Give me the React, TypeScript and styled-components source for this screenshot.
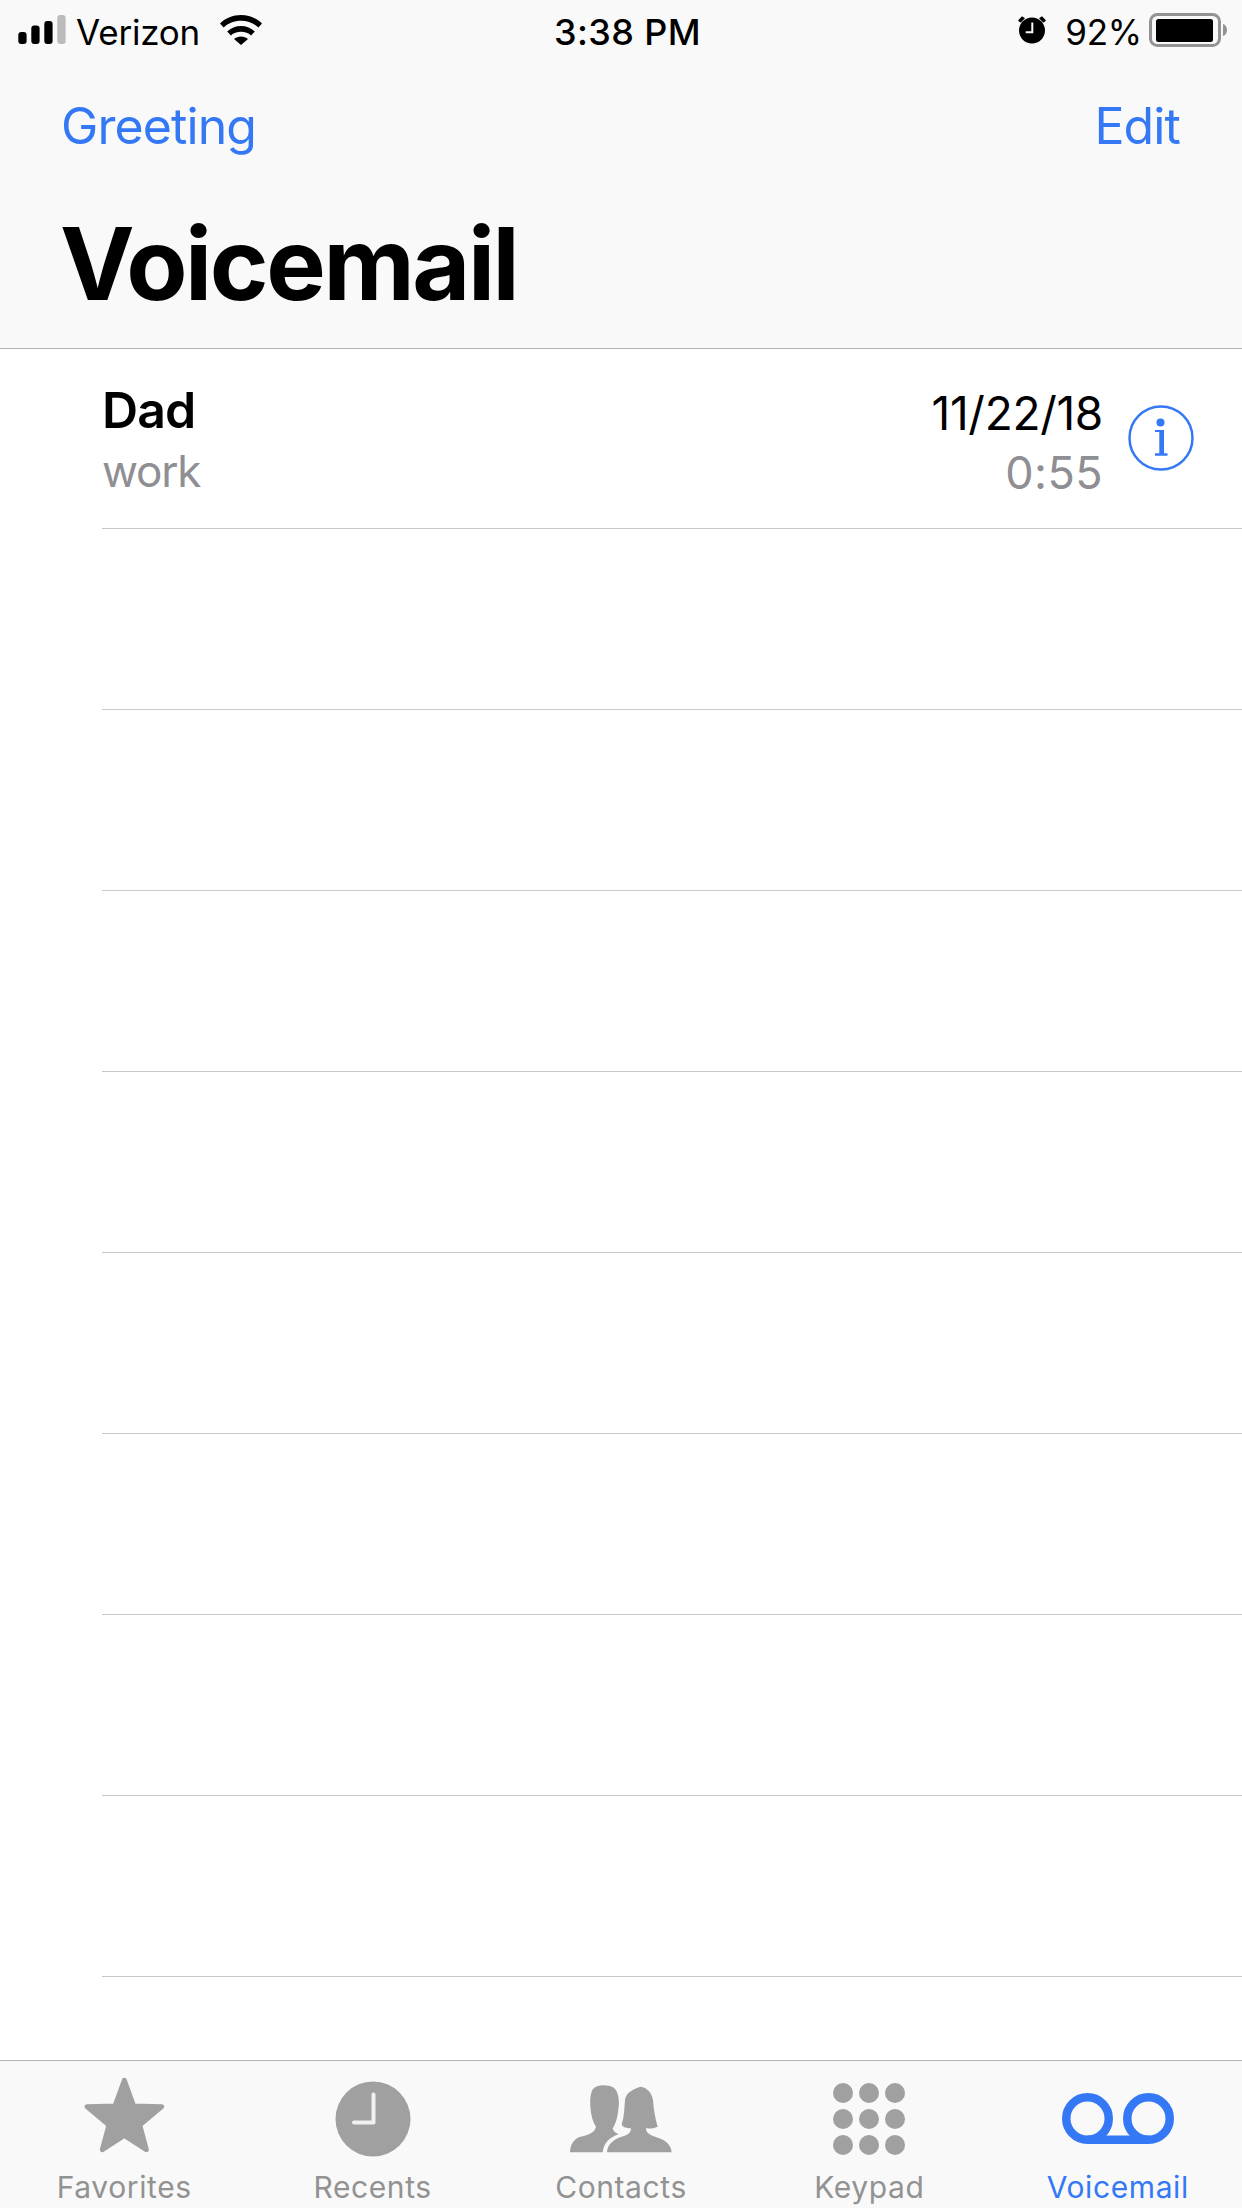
import React from 'react';
import styled, { createGlobalStyle } from 'styled-components';

const BLUE = '#3478f6';
const ICON_GRAY = '#a0a0a0';
const SANS = 'Inter, "Liberation Sans", sans-serif';

const GlobalStyle = createGlobalStyle`
  html, body {
    margin: 0;
    padding: 0;
    background: #fff;
  }
`;

const Screen = styled.div`
  width: 1242px;
  height: 2208px;
  display: flex;
  flex-direction: column;
  overflow: hidden;
  background: #fff;
  color: #000;
  font-family: ${SANS};
`;

const Header = styled.header`
  height: 348px;
  flex: none;
  display: flex;
  flex-direction: column;
  background: #f9f9f9;
  border-bottom: 1px solid #b2b2b2;
`;

const StatusBar = styled.div`
  height: 60px;
  display: grid;
  grid-template-columns: 1fr auto 1fr;
  align-items: center;
  padding: 0 15px 0 18px;
`;

const StatusGroup = styled.div<{ $end?: boolean }>`
  display: flex;
  align-items: center;
  justify-content: ${p => (p.$end ? 'flex-end' : 'flex-start')};
`;

const StatusText = styled.span<{ $gap?: number }>`
  font-size: 35px;
  line-height: 56px;
  letter-spacing: -0.2px;
  margin: 4px 0 0 ${p => p.$gap ?? 0}px;
`;

const StatusIcon = styled.span<{ $gap?: number }>`
  display: flex;
  margin-left: ${p => p.$gap ?? 0}px;
`;

const Clock = styled.span`
  font-size: 36px;
  line-height: 56px;
  margin: 4px 0 0 10px;
  font-weight: 500;
  letter-spacing: 0.4px;
`;

const NavRow = styled.div`
  height: 68px;
  margin-top: 32px;
  display: flex;
  align-items: center;
  justify-content: space-between;
  padding: 0 62px 0 61px;
`;

const NavLink = styled.span`
  font-size: 50px;
  line-height: 68px;
  letter-spacing: -0.9px;
  color: ${BLUE};
`;

const Title = styled.h1`
  margin: 49px 0 0;
  padding-left: 60px;
  font-size: 100px;
  line-height: 110px;
  font-weight: 700;
  letter-spacing: -2.4px;
`;

const List = styled.div`
  flex: 1;
  display: flex;
  flex-direction: column;
  min-height: 0;
  margin-top: -1px;
`;

const Row = styled.div`
  height: 180px;
  flex: none;
  margin-left: 102px;
  border-bottom: 1px solid #c8c7cc;
  display: flex;
  align-items: center;
  padding-right: 48px;
`;

const RowText = styled.div`
  flex: 1;
  display: flex;
  flex-direction: column;
  padding-top: 6px;
`;

const RowMeta = styled.div`
  display: flex;
  flex-direction: column;
  align-items: flex-end;
  margin-right: 25px;
  padding-top: 10px;
`;

const Name = styled.span`
  font-size: 50px;
  line-height: 60px;
  font-weight: 600;
  letter-spacing: -0.9px;
`;

const Sub = styled.span`
  font-size: 44px;
  line-height: 62px;
  color: #8e8e93;
  letter-spacing: -1.2px;
`;

const DateText = styled.span`
  font-size: 46px;
  line-height: 60px;
  letter-spacing: -0.3px;
`;

const Duration = styled.span`
  font-size: 45px;
  line-height: 60px;
  color: #8e8e93;
  letter-spacing: 0.4px;
`;

const TabBar = styled.nav`
  height: 147px;
  flex: none;
  display: grid;
  grid-template-columns: repeat(5, 1fr);
  background: #f9f9f9;
  border-top: 1px solid #b2b2b2;
`;

const Tab = styled.div<{ $active?: boolean }>`
  display: flex;
  flex-direction: column;
  align-items: center;
  color: ${p => (p.$active ? BLUE : '#929292')};
`;

const TabIconSlot = styled.div`
  height: 101px;
  padding-top: 7px;
  display: flex;
  align-items: center;
  justify-content: center;
  color: ${ICON_GRAY};
`;

const TabLabel = styled.span`
  font-size: 30px;
  line-height: 36px;
  letter-spacing: 0.6px;
`;

const SignalIcon = () => (
  <svg width="48" height="30" viewBox="0 0 48 30">
    <rect x="0.300" y="17" width="8.300" height="12" rx="3" fill="#000" />
    <rect x="13.300" y="10.500" width="8.300" height="18.500" rx="3" fill="#000" />
    <rect x="26.300" y="6" width="8.300" height="23" rx="3" fill="#000" />
    <rect x="39.300" y="0" width="8.300" height="29" rx="3" fill="#bbb" />
  </svg>
);

const WifiIcon = () => (
  <svg width="42" height="30" viewBox="0 0 42 30">
    <path d="M0 8.500C5.500 3 13 0 21 0s15.500 3 21 8.500l-3.600 4C33.800 8.200 27.800 5.800 21 5.800S8.200 8.200 3.600 12.500Z" fill="#000" />
    <path d="M7.200 16.500C10.800 13 15.700 11 21 11s10.200 2 13.800 5.500l-3.700 4C28.500 18 25 16.800 21 16.800s-7.500 1.200-10.100 3.700Z" fill="#000" />
    <path d="M14 24C15.800 22.400 18.300 21.500 21 21.500s5.200 0.900 7 2.500L21 30Z" fill="#000" />
  </svg>
);

const AlarmIcon = () => (
  <svg width="30" height="30" viewBox="0 0 30 30">
    <circle cx="15" cy="15.500" r="13" fill="#000" />
    <path d="M1 5.500 5 1.300 8 3.300 3.500 7.700ZM29 5.500 25 1.300 22 3.300 26.500 7.700Z" fill="#000" />
    <path d="M15.300 7.500V17.200H8.700" fill="none" stroke="#f9f9f9" strokeWidth="2" />
  </svg>
);

const BatteryIcon = () => (
  <svg width="78" height="36" viewBox="0 0 78 36">
    <rect x="1.500" y="2.500" width="69" height="31" rx="7" fill="none" stroke="#939393" strokeWidth="3" />
    <rect x="7" y="7" width="57" height="23" rx="2.500" fill="#000" />
    <path d="M74 12c2.500 0.800 4 3 4 6s-1.500 5.200-4 6Z" fill="#939393" />
  </svg>
);

const InfoIcon = () => (
  <svg width="66" height="66" viewBox="0 0 66 66">
    <circle cx="33" cy="33" r="31.500" fill="none" stroke={ BLUE } strokeWidth="2.500" />
    <circle cx="32.500" cy="17.500" r="4" fill={ BLUE } />
    <path d="M27 25H36V48.300H39.500V50.700H27V48.300H31.300V27H27Z" fill={ BLUE } />
  </svg>
);

const StarIcon = () => (
  <svg width="83" height="85" viewBox="248 105 249 255">
    <path
      d="M372 118 400 195 484 197 418 252 438 326 372 283 306 326 326 252 260 197 344 195Z"
      fill="currentColor"
      stroke="currentColor"
      strokeWidth="15"
      strokeLinejoin="round" />
  </svg>
);

const RecentsIcon = () => (
  <svg width="76" height="76" viewBox="0 0 76 76">
    <circle cx="38" cy="38" r="37.500" fill="currentColor" />
    <path
      d="M38.500 13.500V41.500H19"
      fill="none"
      stroke="#f0f0f0"
      strokeWidth="4"
      strokeLinecap="round"
      strokeLinejoin="round" />
  </svg>
);

const ContactsIcon = () => (
  <svg width="102" height="68" viewBox="57 40 306 204">
    <path
      d="M57 242C58 222 65 205 85 196 105 190 130 188 135 165 125 150 120 130 118 105 117 85 118 62 128 50 140 38 170 38 188 48 203 60 205 85 203 105 200 135 195 155 185 170 187 180 195 185 203 188 180 195 158 212 155 242Z"
      fill="currentColor" />
    <path
      d="M168 242C170 222 180 210 200 200 220 192 240 190 240 170 228 170 215 168 212 158 220 135 220 110 222 85 224 65 240 55 268 45 290 48 303 65 306 85 308 115 313 140 320 165 310 170 295 171 285 170 284 185 300 192 320 198 345 205 360 220 362 242Z"
      fill="currentColor" />
  </svg>
);

const KeypadIcon = () => (
  <svg width="73" height="72" viewBox="0 0 73 72">
    {[0, 1, 2].flatMap(row =>
      [0, 1, 2].map(col => (
        <circle
          key={ `${row}-${col}` }
          cx={ 10 + col * 26 }
          cy={ 10 + row * 26 }
          r="10"
          fill="currentColor" />
      )))}
  </svg>
);

const VoicemailIcon = () => (
  <svg width="112" height="51" viewBox="0 0 112 51">
    <circle cx="25.500" cy="25.500" r="21.250" fill="none" stroke={ BLUE } strokeWidth="8.500" />
    <circle cx="86.500" cy="25.500" r="21.250" fill="none" stroke={ BLUE } strokeWidth="8.500" />
    <rect x="25.500" y="42.500" width="61" height="8.500" fill={ BLUE } />
  </svg>
);

const tabs = [
  { label: 'Favorites', icon: <StarIcon /> },
  { label: 'Recents', icon: <RecentsIcon /> },
  { label: 'Contacts', icon: <ContactsIcon /> },
  { label: 'Keypad', icon: <KeypadIcon /> },
  { label: 'Voicemail', icon: <VoicemailIcon />, active: true },
];

const EMPTY_ROWS = 8;

const App = () => (
  <>
    <GlobalStyle />
    <Screen>
      <Header>
        <StatusBar>
          <StatusGroup>
            <SignalIcon />
            <StatusText $gap={ 10 }>Verizon</StatusText>
            <StatusIcon $gap={ 20 }><WifiIcon /></StatusIcon>
          </StatusGroup>
          <Clock>3:38 PM</Clock>
          <StatusGroup $end>
            <AlarmIcon />
            <StatusText $gap={ 18 }>92%</StatusText>
            <StatusIcon $gap={ 7 }><BatteryIcon /></StatusIcon>
          </StatusGroup>
        </StatusBar>
        <NavRow>
          <NavLink>Greeting</NavLink>
          <NavLink>Edit</NavLink>
        </NavRow>
        <Title>Voicemail</Title>
      </Header>
      <List>
        <Row>
          <RowText>
            <Name>Dad</Name>
            <Sub>work</Sub>
          </RowText>
          <RowMeta>
            <DateText>11/22/18</DateText>
            <Duration>0:55</Duration>
          </RowMeta>
          <InfoIcon />
        </Row>
        {Array.from({ length: EMPTY_ROWS }, (_, index) => (
          <Row key={ index } />
        ))}
      </List>
      <TabBar>
        {tabs.map(tab => (
          <Tab key={ tab.label } $active={ tab.active }>
            <TabIconSlot>{tab.icon}</TabIconSlot>
            <TabLabel>{tab.label}</TabLabel>
          </Tab>
        ))}
      </TabBar>
    </Screen>
  </>
);

export default App;
